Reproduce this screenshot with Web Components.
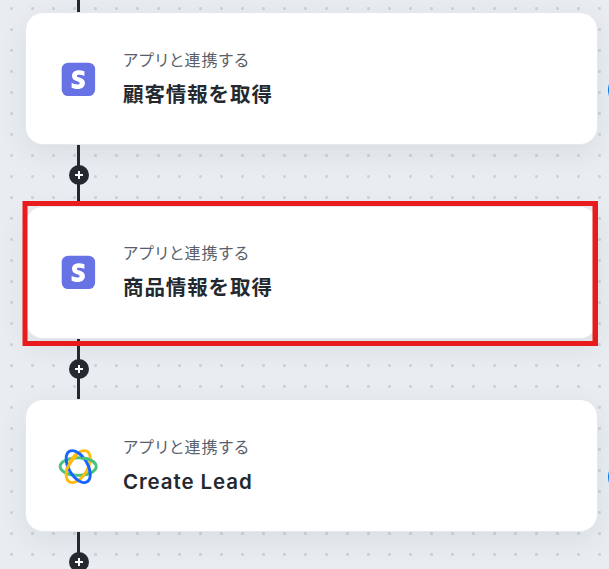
<!DOCTYPE html>
<html lang="ja">
<head>
<meta charset="utf-8">
<title>Workflow</title>
<style>html,body{margin:0;height:100%;overflow:hidden;background:#e9edf2}</style>
</head>
<body>
<flow-canvas>
  <flow-connector style="--h:12px" bare></flow-connector>
  <flow-card handle><brand-icon slot="icon" kind="s"></brand-icon><span slot="label">アプリと連携する</span><span slot="title">顧客情報を取得</span></flow-card>
  <flow-connector></flow-connector>
  <flow-card marked><brand-icon slot="icon" kind="s"></brand-icon><span slot="label">アプリと連携する</span><span slot="title">商品情報を取得</span></flow-card>
  <flow-connector></flow-connector>
  <flow-card handle><brand-icon slot="icon" kind="rings"></brand-icon><span slot="label">アプリと連携する</span><span slot="title">Create Lead</span></flow-card>
  <flow-connector></flow-connector>
</flow-canvas>
<script>
const define = (name, html) => customElements.define(name, class extends HTMLElement {
  connectedCallback() {
    if (this.shadowRoot) return;
    const t = document.createElement('template');
    t.innerHTML = typeof html === 'function' ? html(this) : html;
    this.attachShadow({mode: 'open'}).append(t.content.cloneNode(true));
  }
});

define('flow-canvas', `<style>
:host{display:flex;flex-direction:column;box-sizing:border-box;width:609px;height:569px;overflow:hidden;padding-left:25px;
background:radial-gradient(circle at 10.5px 10.5px,#cdd2d8 1.1px,transparent 1.9px) 1px -2px/21px 21px,#e9edf2;
font-family:Inter,"Noto Sans CJK JP",sans-serif}
</style><slot></slot>`);

define('flow-connector', el => `<style>
:host{display:flex;flex:none;box-sizing:border-box;width:107px;height:var(--h,60.5px);justify-content:center;align-items:center;
background:linear-gradient(#24292f,#24292f) 52px 0/3px 100% no-repeat;position:relative}
svg{display:block}
</style>${el.hasAttribute('bare') ? '' : `<svg width="20" height="20" viewBox="0 0 20 20"><circle cx="10" cy="10" r="10" fill="#24292f"/><path d="M10 6v8M6 10h8" stroke="#fff" stroke-width="2"/></svg>`}`);

define('flow-card', `<style>
:host{display:flex;flex:none;position:relative;box-sizing:border-box;width:573px;height:133px;border:1px solid #e5e9ed;border-radius:18px;
background:#fff;box-shadow:0 8px 28px rgba(31,45,55,.08);align-items:flex-start;padding-left:32px;padding-top:34px}
:host([marked]){padding-top:33.5px}
.icon{width:40px;height:65px;display:flex;justify-content:center;align-items:center}
.text{display:flex;flex-direction:column;margin-left:25px;white-space:nowrap}
.label{font-size:16px;line-height:24px;letter-spacing:1.15px;color:#57606a;font-feature-settings:"palt";font-weight:400;margin-top:1px}
.title{font-size:20.5px;line-height:30px;letter-spacing:.9px;color:#24292f;font-weight:600;margin-top:8px}
.mark{display:none;position:absolute;left:-3px;top:-5.5px;width:566px;height:135px;border:5px solid #e81c1c;border-left-width:4px;z-index:2;
box-shadow:-1px 0 rgba(232,28,28,.5),inset 1px 0 rgba(232,28,28,.5),inset -1px 0 rgba(232,28,28,.5)}
:host([marked]) .mark{display:block}
.handle{display:none;position:absolute;left:582px;top:59px;width:36px;height:36px;border-radius:50%;background:#0879ee}
:host([handle]) .handle{display:block}
</style><div class="icon"><slot name="icon"></slot></div>
<div class="text"><div class="label"><slot name="label"></slot></div><div class="title"><slot name="title"></slot></div></div>
<div class="mark"></div><div class="handle"></div>`);

define('brand-icon', el => `<style>:host{display:block}svg{display:block}</style>` + (el.getAttribute('kind') === 's'
? `<svg width="36" height="36" viewBox="0 0 36 36"><g transform="translate(1.500 .5)"><rect x=".2" y=".2" width="33.4" height="33.4" rx="6.5" fill="#6772e5"/><path transform="translate(-.5 0) scale(1.040 1)" fill="#fff" d="M15.2 13.4c0-.9.8-1.2 2-1.2 1.7 0 3.800.5 5.300 1.400V8.700C20.800 8 19.100 7.700 17.300 7.700c-4 0-6.700 2.100-6.700 5.900 0 5.600 7.300 4.700 7.300 7.100 0 1-.9 1.300-2.100 1.300-1.800 0-4-.7-5.600-1.700v4.900c1.900.9 3.800 1.200 5.600 1.200 4.300 0 7.200-2.100 7.200-6 0-6-7.800-4.900-7.800-7z"/></g></svg>`
: `<svg width="40" height="40" viewBox="0 0 40 40" fill="none" stroke-width="2.900"><g transform="translate(20.200 19.600)"><ellipse rx="18" ry="8.800" stroke="#4bc27d"/><ellipse rx="17.600" ry="9.500" transform="rotate(-60)" stroke="#ffbc0a"/><ellipse rx="17.600" ry="9.500" transform="rotate(60)" stroke="#1764ff"/><path d="M4 -8.600C10.500 -7.800 16 -5 17.500 -2" stroke="#4bc27d"/><path d="M-12.300 4.800C-10 -1 -6 -7 -1 -11.700" stroke="#ffbc0a"/></g></svg>`));
</script>
</body>
</html>
